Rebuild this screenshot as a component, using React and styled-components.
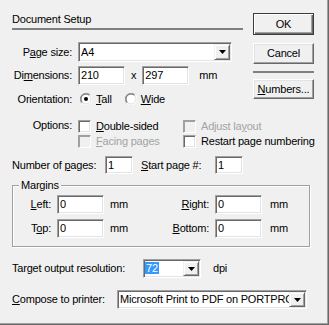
import React from "react";
import styled, { createGlobalStyle } from "styled-components";

const Global = createGlobalStyle`
  html, body { margin: 0; padding: 0; background: #f0f0f0; }
  body {
    font-family: "Liberation Sans", Arial, sans-serif;
    font-size: 11px;
    letter-spacing: -0.2px;
    color: #000;
  }
  * { box-sizing: border-box; }
`;

const Dialog = styled.div`
  width: 329px;
  height: 325px;
  padding: 13px 0 0 12px;
  background: #f0f0f0;
  box-shadow: inset -1px -1px 0 #696969, inset -2px -2px 0 #a0a0a0;
  display: flex;
  flex-direction: column;
  line-height: 13px;
`;

const Top = styled.div`
  display: grid;
  grid-template-columns: 231px 61px;
  column-gap: 10px;
  align-items: start;
`;

const Pane = styled.div`
  display: flex;
  flex-direction: column;
`;

const Title = styled.div`
  height: 17px;
  border-bottom: 2px solid #808080;
`;

const Row = styled.div`
  display: flex;
  align-items: center;
  height: ${(p) => p.$h}px;
  margin-top: ${(p) => p.$mt}px;
  flex: none;
`;

const Label = styled.span`
  width: ${(p) => p.$w ?? 60}px;
  margin-right: ${(p) => p.$mr ?? 6}px;
  margin-left: ${(p) => p.$ml ?? 0}px;
  text-align: ${(p) => (p.$left ? "left" : "right")};
  white-space: nowrap;
  flex: none;
`;

const Key = styled.span`
  text-decoration: underline;
`;

const Sunken = styled.div`
  width: ${(p) => p.$w}px;
  height: ${(p) => p.$h ?? 19}px;
  flex: none;
  display: flex;
  align-items: center;
  background: #fff;
  border: 1px solid;
  border-color: #a0a0a0 #fff #fff #a0a0a0;
  box-shadow: inset 1px 1px 0 #696969, inset -1px -1px 0 #e3e3e3;
  padding-left: ${(p) => p.$pl ?? 2}px;
  white-space: nowrap;
  overflow: hidden;
`;

const SelectText = styled.span`
  flex: 1;
  overflow: hidden;
  white-space: nowrap;
`;

const Highlight = styled.span`
  background: #3399ff;
  color: #fff;
  padding: 0 1px;
`;

const DropBtn = styled.span`
  width: 16px;
  height: ${(p) => p.$h ?? 16}px;
  margin-right: 1px;
  flex: none;
  display: flex;
  align-items: center;
  justify-content: center;
  background: #f0f0f0;
  border: 1px solid;
  border-color: #f0f0f0 #696969 #696969 #f0f0f0;
  box-shadow: inset 1px 1px 0 #fff, inset -1px -1px 0 #a0a0a0;
`;

const Unit = styled.span`
  margin-left: ${(p) => p.$ml ?? 0}px;
  white-space: nowrap;
`;

const Button = styled.div`
  height: ${(p) => p.$h}px;
  margin-top: ${(p) => p.$mt ?? 0}px;
  display: flex;
  align-items: center;
  justify-content: center;
  background: #f0f0f0;
  border: 1px solid;
  border-color: ${(p) => (p.$default ? "#3c3c3c" : "#fff #696969 #696969 #fff")};
  box-shadow: ${(p) =>
    p.$default
      ? "inset 1px 1px 0 #fff, inset -1px -1px 0 #696969, inset -2px -2px 0 #a0a0a0"
      : "inset -1px -1px 0 #a0a0a0, inset 1px 1px 0 #e3e3e3"};
`;

const Separator = styled.div`
  height: 2px;
  margin-top: 7px;
  background: #808080;
`;

const Options = styled.div`
  display: flex;
  margin-top: 13px;
`;

const CheckGrid = styled.div`
  display: grid;
  grid-template-columns: 105px 1fr;
  grid-auto-rows: 15px;
`;

const CheckItem = styled.label`
  display: flex;
  align-items: center;
  gap: 5px;
  white-space: nowrap;
  color: ${(p) => (p.$disabled ? "#a3a3a3" : "#000")};
`;

const Box = styled.span`
  width: 13px;
  height: 13px;
  flex: none;
  background: ${(p) => (p.$disabled ? "#f0f0f0" : "#fff")};
  border: 1px solid;
  border-color: #a0a0a0 #fff #fff #a0a0a0;
  box-shadow: ${(p) =>
    p.$disabled
      ? "inset 1px 1px 0 #a0a0a0, inset -1px -1px 0 #f0f0f0"
      : "inset 1px 1px 0 #696969, inset -1px -1px 0 #e3e3e3"};
`;

const RadioItem = styled.label`
  display: flex;
  align-items: center;
  gap: 4px;
  margin-left: ${(p) => p.$ml}px;
  white-space: nowrap;
`;

const Group = styled.fieldset`
  width: 298px;
  margin: 5px 0 0 0;
  padding: 3px 0 8px 0;
  min-width: 0;
  border: 1px solid #a0a0a0;
  box-shadow: 1px 1px 0 #fff, inset 1px 1px 0 #fff;
`;

const Legend = styled.legend`
  margin-left: 6px;
  padding: 0 2px;
  line-height: 13px;
  background: #f0f0f0;
`;

const MarginGrid = styled.div`
  display: grid;
  grid-template-columns: 38px 47px 53px 40px 47px auto;
  grid-auto-rows: 19px;
  column-gap: 6px;
  row-gap: 5px;
  align-items: center;
`;

const GridLabel = styled.span`
  text-align: right;
  white-space: nowrap;
`;

const Radio = ({ checked }) => (
  <svg width="12" height="12" viewBox="0 0 12 12">
    <path d="M1.76 10.24A6 6 0 0 1 10.24 1.76" stroke="#a0a0a0" fill="none" />
    <path d="M10.24 1.76A6 6 0 0 1 1.76 10.24" stroke="#fff" fill="none" />
    <circle cx="6" cy="6" r="4.5" fill="#fff" />
    <path d="M2.46 9.54A5 5 0 0 1 9.54 2.46" stroke="#696969" fill="none" />
    <path d="M9.54 2.46A5 5 0 0 1 2.46 9.54" stroke="#e3e3e3" fill="none" />
    {checked && <circle cx="6" cy="6" r="2" fill="#000" />}
  </svg>
);

const Arrow = () => (
  <svg width="7" height="4" viewBox="0 0 7 4">
    <polygon points="0,0 7,0 3.5,4" fill="#000" />
  </svg>
);

const Select = ({ w, h = 20, children }) => (
  <Sunken $w={w} $h={h}>
    <SelectText>{children}</SelectText>
    <DropBtn $h={h - 4}>
      <Arrow />
    </DropBtn>
  </Sunken>
);

const Check = ({ disabled, children }) => (
  <CheckItem $disabled={disabled}>
    <Box $disabled={disabled} />
    <span>{children}</span>
  </CheckItem>
);

export default function App() {
  return (
    <>
      <Global />
      <Dialog>
        <Top>
          <Pane>
            <Title>Document Setup</Title>
            <Row $h={20} $mt={12}>
              <Label>
                P<Key>a</Key>ge size:
              </Label>
              <Select w={154}>A4</Select>
            </Row>
            <Row $h={19} $mt={4}>
              <Label>
                Di<Key>m</Key>ensions:
              </Label>
              <Sunken $w={47}>210</Sunken>
              <Unit $ml={6}>x</Unit>
              <Sunken $w={47} style={{ marginLeft: 6 }}>
                297
              </Sunken>
              <Unit $ml={10}>mm</Unit>
            </Row>
            <Row $h={14} $mt={7}>
              <Label>Orientation:</Label>
              <RadioItem $ml={2}>
                <Radio checked />
                <span>
                  <Key>T</Key>all
                </span>
              </RadioItem>
              <RadioItem $ml={13}>
                <Radio />
                <span>
                  <Key>W</Key>ide
                </span>
              </RadioItem>
            </Row>
          </Pane>
          <Pane>
            <Button $h={22} $default>
              OK
            </Button>
            <Button $h={21} $mt={8}>
              Cancel
            </Button>
            <Separator />
            <Button $h={20} $mt={6}>
              <span>
                <Key>N</Key>umbers...
              </span>
            </Button>
          </Pane>
        </Top>

        <Options>
          <Label>Options:</Label>
          <CheckGrid>
            <Check>
              <Key>D</Key>ouble-sided
            </Check>
            <Check disabled>
              Adjust la<Key>y</Key>out
            </Check>
            <Check disabled>
              <Key>F</Key>acing pages
            </Check>
            <Check>Restart page numbering</Check>
          </CheckGrid>
        </Options>

        <Row $h={18} $mt={7}>
          <Label $w={93} $mr={0} $left>
            Number of <Key>p</Key>ages:
          </Label>
          <Sunken $w={28} $h={18}>1</Sunken>
          <Label $w={74} $mr={0} $ml={8} $left>
            <Key>S</Key>tart page #:
          </Label>
          <Sunken $w={28} $h={18}>1</Sunken>
        </Row>

        <Group>
          <Legend>Margins</Legend>
          <MarginGrid>
            <GridLabel>
              <Key>L</Key>eft:
            </GridLabel>
            <Sunken $w={47}>0</Sunken>
            <span>mm</span>
            <GridLabel>
              <Key>R</Key>ight:
            </GridLabel>
            <Sunken $w={47}>0</Sunken>
            <Unit $ml={2}>mm</Unit>
            <GridLabel>
              T<Key>o</Key>p:
            </GridLabel>
            <Sunken $w={47}>0</Sunken>
            <span>mm</span>
            <GridLabel>
              <Key>B</Key>ottom:
            </GridLabel>
            <Sunken $w={47}>0</Sunken>
            <Unit $ml={2}>mm</Unit>
          </MarginGrid>
        </Group>

        <Row $h={19} $mt={12}>
          <Label $w={131} $mr={0} $left>
            Tar<Key>g</Key>et output resolution:
          </Label>
          <Sunken $w={58} $h={19} $pl={1}>
            <SelectText>
              <Highlight>72</Highlight>
            </SelectText>
            <DropBtn $h={15}>
              <Arrow />
            </DropBtn>
          </Sunken>
          <Unit $ml={12}>dpi</Unit>
        </Row>

        <Row $h={19} $mt={12}>
          <Label $w={105} $mr={0} $left>
            <Key>C</Key>ompose to printer:
          </Label>
          <Select w={190} h={19}>
            Microsoft Print to PDF on PORTPROMPT:
          </Select>
        </Row>
      </Dialog>
    </>
  );
}
